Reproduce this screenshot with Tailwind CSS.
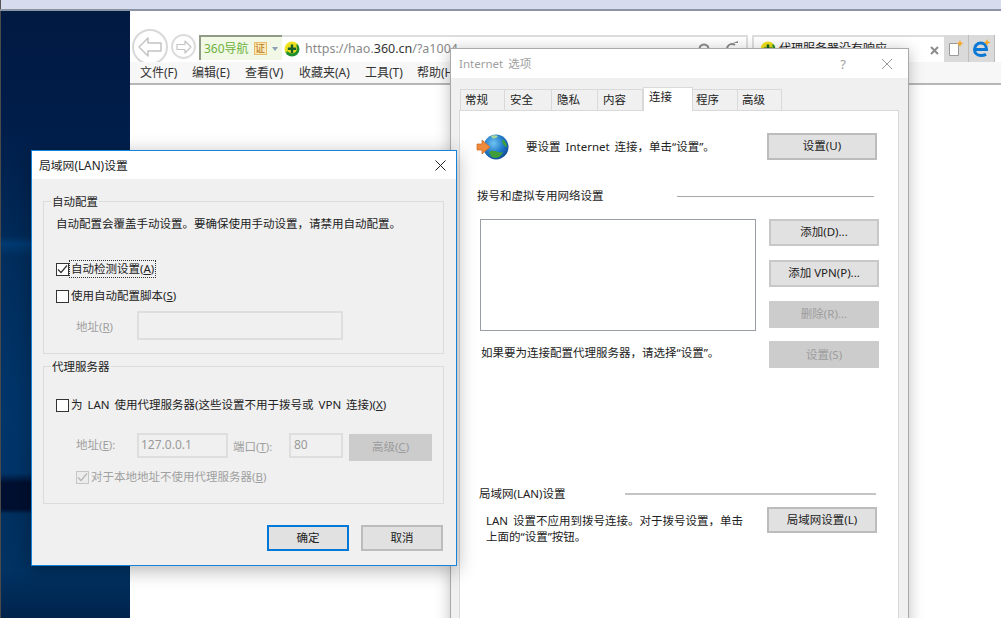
<!DOCTYPE html>
<html lang="zh-CN">
<head>
    <meta charset="UTF-8">
    <title>局域网(LAN)设置</title>
    <script src="https://cdn.jsdelivr.net/npm/@tailwindcss/browser@4"></script>
</head>
<body class="relative w-[1001px] h-[618px] overflow-hidden bg-white text-[11.5px] leading-[16px] [word-spacing:2px] text-[#222] font-['Noto_Sans','Noto_Sans_CJK_SC',sans-serif]">
    <!-- 顶部条 -->
    <div class="h-[9px] bg-[#d6dcee] border-l border-[#555]"></div>
    <div class="h-[2px] bg-[#8b94a5]"></div>

    <div class="flex h-[607px]">
        <!-- 桌面背景 -->
        <div class="w-[130px] shrink-0 border-l border-[#4a4a4a] bg-[linear-gradient(180deg,#001a42_0px,#001c48_100px,#002a58_225px,#003a72_233px,#002d5c_245px,#00356a_400px,#003468_462px,#000f30_472px,#000f30_498px,#00305f_503px,#003262_560px,#00234c_607px)]"></div>

        <!-- 浏览器 -->
        <div class="flex-1 flex flex-col">
            <div class="h-[51px] overflow-hidden flex items-start pl-[2px]">
                <div class="mt-[18px] w-[36px] h-[36px] rounded-full border-2 border-[#d8d8d8] flex items-center justify-center shrink-0">
                    <svg width="26" height="22" viewBox="0 0 26 22" fill="#fff" stroke="#c4c4c4" stroke-width="1.5"><path d="M11 2 2 11l9 9v-5h13V7H11z" stroke-linejoin="round"/></svg>
                </div>
                <div class="mt-[23px] ml-[3px] w-[25px] h-[25px] rounded-full border-2 border-[#dcdcdc] flex items-center justify-center shrink-0">
                    <svg width="16" height="14" viewBox="0 0 16 14" fill="#fff" stroke="#c4c4c4" stroke-width="1.2"><path d="M9 1l6 6-6 6V9.500H1v-5h8z" stroke-linejoin="round"/></svg>
                </div>
                <!-- 地址栏 -->
                <div class="mt-[24px] ml-[3px] w-[549px] h-[25px] border-2 border-b-0 border-l-0 border-[#dedede] flex items-center shrink-0">
                    <div class="w-[83px] h-[25px] -mt-[2px] bg-[#f1f8e6] border-l-2 border-t-2 border-[#8f9b86] flex items-center pl-[3px] text-[#6db23e] text-[12px]">
                        <span>360导航</span>
                        <span class="ml-[5px] w-[13px] h-[13px] bg-[#fbe8b6] border border-[#e8bb6a] text-[#b5781e] text-[10px] leading-[11px] text-center">证</span>
                        <span class="ml-[5px] w-0 h-0 border-x-[3px] border-t-[4px] border-x-transparent border-t-[#8ba0b5]"></span>
                    </div>
                    <svg class="ml-[2px] shrink-0" width="16" height="16" viewBox="0 0 16 16">
                        <defs><linearGradient id="logo" x1="0" y1="0" x2="0.7" y2="1"><stop offset="0.45" stop-color="#f2e41c"/><stop offset="0.6" stop-color="#1f8f2e"/></linearGradient></defs>
                        <circle cx="8" cy="8" r="7.500" fill="url(#logo)"/>
                        <circle cx="8" cy="7.500" r="5" fill="#e8dc22"/>
                        <path d="M6.800 3.500h2.400v3h3v2.400h-3v3H6.800v-3h-3V6.500h3z" fill="#155f25"/>
                    </svg>
                    <span class="ml-[5px] text-[12.5px] text-[#8a8a8a] whitespace-nowrap">https://hao.<span class="text-[#333]">360.cn</span>/?a1004</span>
                    <!-- 搜索、刷新，下半截被窗口盖住 -->
                    <svg class="ml-auto mr-[6px] shrink-0" width="42" height="16" viewBox="0 0 42 16" fill="none" stroke="#8a8a8a" stroke-width="2">
                        <circle cx="6" cy="8" r="4.500"/>
                        <path d="M15 7l3 4 3-4z" fill="#8a8a8a" stroke="none"/>
                        <path d="M37 4a5 5 0 1 0 2 4"/>
                        <path d="M35 2l5 0 0-2z" fill="#8a8a8a" stroke="none"/>
                    </svg>
                </div>
                <!-- 标签 -->
                <div class="mt-[24px] ml-[4px] w-[192px] h-[25px] border-2 border-b-0 border-r-0 border-[#dedede] flex items-center pl-[6px] pr-[5px] shrink-0">
                    <svg class="shrink-0" width="16" height="16" viewBox="0 0 16 16">
                        <circle cx="8" cy="8" r="7.500" fill="url(#logo)"/>
                        <circle cx="8" cy="7.500" r="5" fill="#e8dc22"/>
                        <path d="M6.800 3.500h2.400v3h3v2.400h-3v3H6.800v-3h-3V6.500h3z" fill="#155f25"/>
                    </svg>
                    <span class="ml-[3px] text-[12px] whitespace-nowrap">代理服务器没有响应</span>
                    <svg class="ml-auto mt-[3px]" width="9" height="9" viewBox="0 0 9 9" stroke="#8c8c8c" stroke-width="2"><path d="M1 1l7 7M8 1 1 8"/></svg>
                </div>
                <div class="mt-[24px] w-[25px] h-[27px] bg-[#dadada] border-r border-[#bdbdbd] flex items-center justify-center shrink-0">
                    <svg width="16" height="18" viewBox="0 0 16 18">
                        <path d="M1.500 3.500h9v12h-9z" fill="#fff" stroke="#9a9a9a"/>
                        <path d="M12 0l1 2.500 2.500 1-2.500 1-1 2.500-1-2.500-2.500-1 2.500-1z" fill="#f5a623"/>
                    </svg>
                </div>
                <div class="mt-[24px] w-[26px] h-[27px] bg-[#dadada] border-r border-[#bdbdbd] flex items-center justify-center shrink-0">
                    <svg width="19" height="19" viewBox="0 0 19 19" fill="none">
                        <path d="M3 10.500h11.500C14.500 6.500 12 4 8.800 4 5.500 4 2.500 6.800 2.500 10.500c0 3.700 3 6 6.500 6 2 0 3.800-.5 5-1.300" stroke="#0a78d4" stroke-width="3"/>
                        <path d="M15 0l1 2.500 2.500 1-2.500 1-1 2.500-1-2.500-2.500-1 2.500-1z" fill="#f5a623"/>
                    </svg>
                </div>
            </div>
            <!-- 菜单栏 -->
            <div class="h-[23px] bg-[#f7f7f7] border-b-2 border-[#b7b7b7] flex items-center pl-[10px] pr-0 text-[12px] text-[#333] whitespace-nowrap">
                <span class="w-[52px]">文件(F)</span>
                <span class="w-[53px]">编辑(E)</span>
                <span class="w-[54px]">查看(V)</span>
                <span class="w-[66px]">收藏夹(A)</span>
                <span class="w-[52px]">工具(T)</span>
                <span>帮助(H)</span>
            </div>
            <div class="flex-1 bg-white"></div>
        </div>
    </div>

    <!-- Internet 选项 窗口 -->
    <div class="absolute left-[450px] top-[48px] w-[459px] h-[590px] bg-[#f0f0f0] border border-[#a9a9a9] shadow-[0_2px_14px_rgba(0,0,0,0.25)]">
        <div class="h-[29px] bg-white flex items-center pl-[8px] pr-[15px] text-[#a0a0a0]">
            <span>Internet 选项</span>
            <span class="ml-auto mr-[35px] text-[13px]">?</span>
            <svg width="12" height="12" viewBox="0 0 12 12" stroke="#9a9a9a" stroke-width="1"><path d="M1 1l10 10M11 1 1 11"/></svg>
        </div>
        <div class="h-[32px] flex items-end pl-[9px]">
            <div class="w-[45px] h-[21px] bg-[#f0f0f0] border border-b-0 border-[#d9d9d9] pl-[4px] leading-[19px]">常规</div>
            <div class="w-[47px] h-[21px] bg-[#f0f0f0] border border-b-0 border-l-0 border-[#d9d9d9] pl-[5px] leading-[19px]">安全</div>
            <div class="w-[46px] h-[21px] bg-[#f0f0f0] border border-b-0 border-l-0 border-[#d9d9d9] pl-[5px] leading-[19px]">隐私</div>
            <div class="w-[45px] h-[21px] bg-[#f0f0f0] border border-b-0 border-l-0 border-[#d9d9d9] pl-[5px] leading-[19px]">内容</div>
            <div class="w-[50px] h-[24px] bg-white border border-b-0 border-[#d9d9d9] pl-[5px] leading-[18px] relative -mb-px z-10">连接</div>
            <div class="w-[45px] h-[21px] bg-[#f0f0f0] border border-b-0 border-l-0 border-[#d9d9d9] pl-[3px] leading-[19px]">程序</div>
            <div class="w-[44px] h-[21px] bg-[#f0f0f0] border border-b-0 border-l-0 border-[#d9d9d9] pl-[4px] leading-[19px]">高级</div>
        </div>
        <div class="ml-[8px] w-[440px] h-[520px] bg-white border border-[#d9d9d9]">
            <div class="mt-[22px] h-[27px] flex items-center pl-[16px] pr-[21px]">
                <svg class="shrink-0" width="34" height="28" viewBox="0 0 34 28">
                    <defs>
                        <radialGradient id="globe" cx="0.4" cy="0.35" r="0.75"><stop offset="0" stop-color="#6fc3f2"/><stop offset="0.55" stop-color="#1f78c8"/><stop offset="1" stop-color="#0c3f86"/></radialGradient>
                    </defs>
                    <circle cx="20" cy="14" r="12.500" fill="url(#globe)"/>
                    <path d="M13 19c3-2 6-1 9 0 2 .5 4 .5 5 0-1 3-4 6-8 6-3 0-5-3-6-6z" fill="#3f9e3a"/>
                    <path d="M27 6c2 2 4 5 4 8-2 0-3-2-4-3s-1-3 0-5z" fill="#3f9e3a"/>
                    <path d="M15 3c2-1 5-1 7 0-1 2-4 3-6 2z" fill="#a9d79a"/>
                    <path d="M1 11h5V7l8 7-8 7v-4H1z" fill="#f08a3c" stroke="#c8641f" stroke-width="0.7"/>
                </svg>
                <span class="ml-[16px]">要设置 Internet 连接，单击“设置”。</span>
                <button class="ml-auto w-[110px] h-[27px] bg-[#e1e1e1] border-2 border-[#bcbcbc] pb-px">设置(U)</button>
            </div>
            <div class="mt-[28px] h-[16px] flex items-center pl-[17px] pr-[24px]">
                <span>拨号和虚拟专用网络设置</span>
                <span class="ml-auto w-[197px] h-px bg-[#a8a8a8]"></span>
            </div>
            <div class="mt-[15px] flex pl-[20px]">
                <div class="w-[276px]">
                    <div class="h-[112px] border border-[#9a9fa5] bg-white"></div>
                    <p class="mt-[14px] pl-px">如果要为连接配置代理服务器，请选择“设置”。</p>
                </div>
                <div class="ml-[13px] w-[110px] flex flex-col gap-[14px]">
                    <button class="h-[27px] bg-[#e1e1e1] border-2 border-[#c8c8c8] pb-px">添加(D)...</button>
                    <button class="h-[27px] bg-[#e1e1e1] border-2 border-[#c8c8c8] pb-px">添加 VPN(P)...</button>
                    <button class="h-[27px] bg-[#cccccc] text-[#9c9c9c] pb-px">删除(R)...</button>
                    <button class="-mt-px h-[27px] bg-[#cccccc] text-[#9c9c9c]">设置(S)</button>
                </div>
            </div>
            <div class="mt-[118px] h-[16px] flex items-center pl-[19px] pr-[22px]">
                <span class="-mt-px">局域网(LAN)设置</span>
                <span class="ml-auto -mt-px w-[251px] h-[2px] bg-[#c4c4c4]"></span>
            </div>
            <div class="mt-[5px] flex pl-[26px] pr-[21px]">
                <p class="pt-[6px]">LAN 设置不应用到拨号连接。对于拨号设置，单击<br>上面的“设置”按钮。</p>
                <button class="ml-auto w-[110px] h-[26px] bg-[#e1e1e1] border-2 border-[#bcbcbc] pb-px">局域网设置(L)</button>
            </div>
        </div>
    </div>

    <!-- 局域网(LAN)设置 对话框 -->
    <div class="absolute left-[31px] top-[150px] w-[426px] h-[416px] bg-[#f0f0f0] border border-[#1683d8] shadow-[0_4px_18px_rgba(0,0,0,0.3)]">
        <div class="h-[28px] bg-white flex items-center pl-[7px] pr-[10px]">
            <span class="text-[11.8px]">局域网(LAN)设置</span>
            <svg class="ml-auto" width="11" height="11" viewBox="0 0 11 11" stroke="#222" stroke-width="1"><path d="M.5.500l10 10M10.500.500l-10 10"/></svg>
        </div>
        <div class="pl-[11px] pt-[14px]">
            <fieldset class="w-[401px] h-[161px] border border-[#dcdcdc]">
                <legend class="ml-[7px] px-px h-[16px] relative top-px">自动配置</legend>
                <p class="mt-[7px] pl-[12px] whitespace-nowrap">自动配置会覆盖手动设置。要确保使用手动设置，请禁用自动配置。</p>
                <div class="mt-[29px] pl-[12px] h-[16px] flex items-center">
                    <span class="w-[13px] h-[13px] bg-white border border-[#333] flex items-center justify-center">
                        <svg width="11" height="11" viewBox="0 0 11 11" fill="none" stroke="#333" stroke-width="1.200"><path d="M1 5.500l3 3 6-7"/></svg>
                    </span>
                    <span class="ml-[1px] px-px outline outline-dotted outline-[#333]">自动检测设置(<u>A</u>)</span>
                </div>
                <div class="mt-[11px] pl-[12px] h-[16px] flex items-center">
                    <span class="w-[13px] h-[13px] bg-white border border-[#333]"></span>
                    <span class="ml-[2px]">使用自动配置脚本(<u>S</u>)</span>
                </div>
                <div class="mt-[7px] pl-[32px] flex items-center">
                    <span class="w-[61px] pt-[2px] text-[#a0a0a0]">地址(<u>R</u>)</span>
                    <div class="w-[206px] h-[29px] border-2 border-[#dedede] bg-[#f0f0f0]"></div>
                </div>
            </fieldset>
            <fieldset class="mt-[4px] w-[401px] h-[146px] border border-[#dcdcdc]">
                <legend class="ml-[7px] px-px h-[16px] relative top-px">代理服务器</legend>
                <div class="mt-[23px] pl-[12px] h-[16px] flex items-center">
                    <span class="w-[13px] h-[13px] bg-white border border-[#333]"></span>
                    <span class="ml-[2px] whitespace-nowrap">为 LAN 使用代理服务器(这些设置不用于拨号或 VPN 连接)(<u>X</u>)</span>
                </div>
                <div class="mt-[20px] pl-[32px] flex items-start text-[#a0a0a0]">
                    <span class="w-[61px] pt-[4px]">地址(<u>E</u>):</span>
                    <div class="w-[91px] h-[25px] border-2 border-[#dedede] pl-[2px] leading-[20px] text-[#9a9a9a] text-[12px]">127.0.0.1</div>
                    <span class="ml-[5px] w-[56px] pt-[6px]">端口(<u>T</u>):</span>
                    <div class="w-[54px] h-[25px] border-2 border-[#dedede] pl-[3px] leading-[20px] text-[#9a9a9a] text-[12px]">80</div>
                    <button class="ml-[6px] mt-px w-[83px] h-[27px] bg-[#cccccc] text-[#9c9c9c] pb-[2px]">高级(<u>C</u>)</button>
                </div>
                <div class="mt-[8px] pl-[32px] h-[16px] flex items-center text-[#a0a0a0]">
                    <span class="w-[13px] h-[13px] bg-[#ececec] border border-[#c6c6c6] flex items-center justify-center">
                        <svg width="11" height="11" viewBox="0 0 11 11" fill="none" stroke="#b4b4b4" stroke-width="1.200"><path d="M1 5.500l3 3 6-7"/></svg>
                    </span>
                    <span class="ml-[2px]">对于本地地址不使用代理服务器(<u>B</u>)</span>
                </div>
            </fieldset>
            <div class="mt-[21px] flex justify-end gap-[12px] pr-[13px]">
                <button class="w-[82px] h-[26px] bg-[#e1e1e1] border-2 border-[#0078d7]">确定</button>
                <button class="w-[82px] h-[26px] bg-[#e1e1e1] border-2 border-[#bcbcbc]">取消</button>
            </div>
        </div>
    </div>
</body>
</html>
